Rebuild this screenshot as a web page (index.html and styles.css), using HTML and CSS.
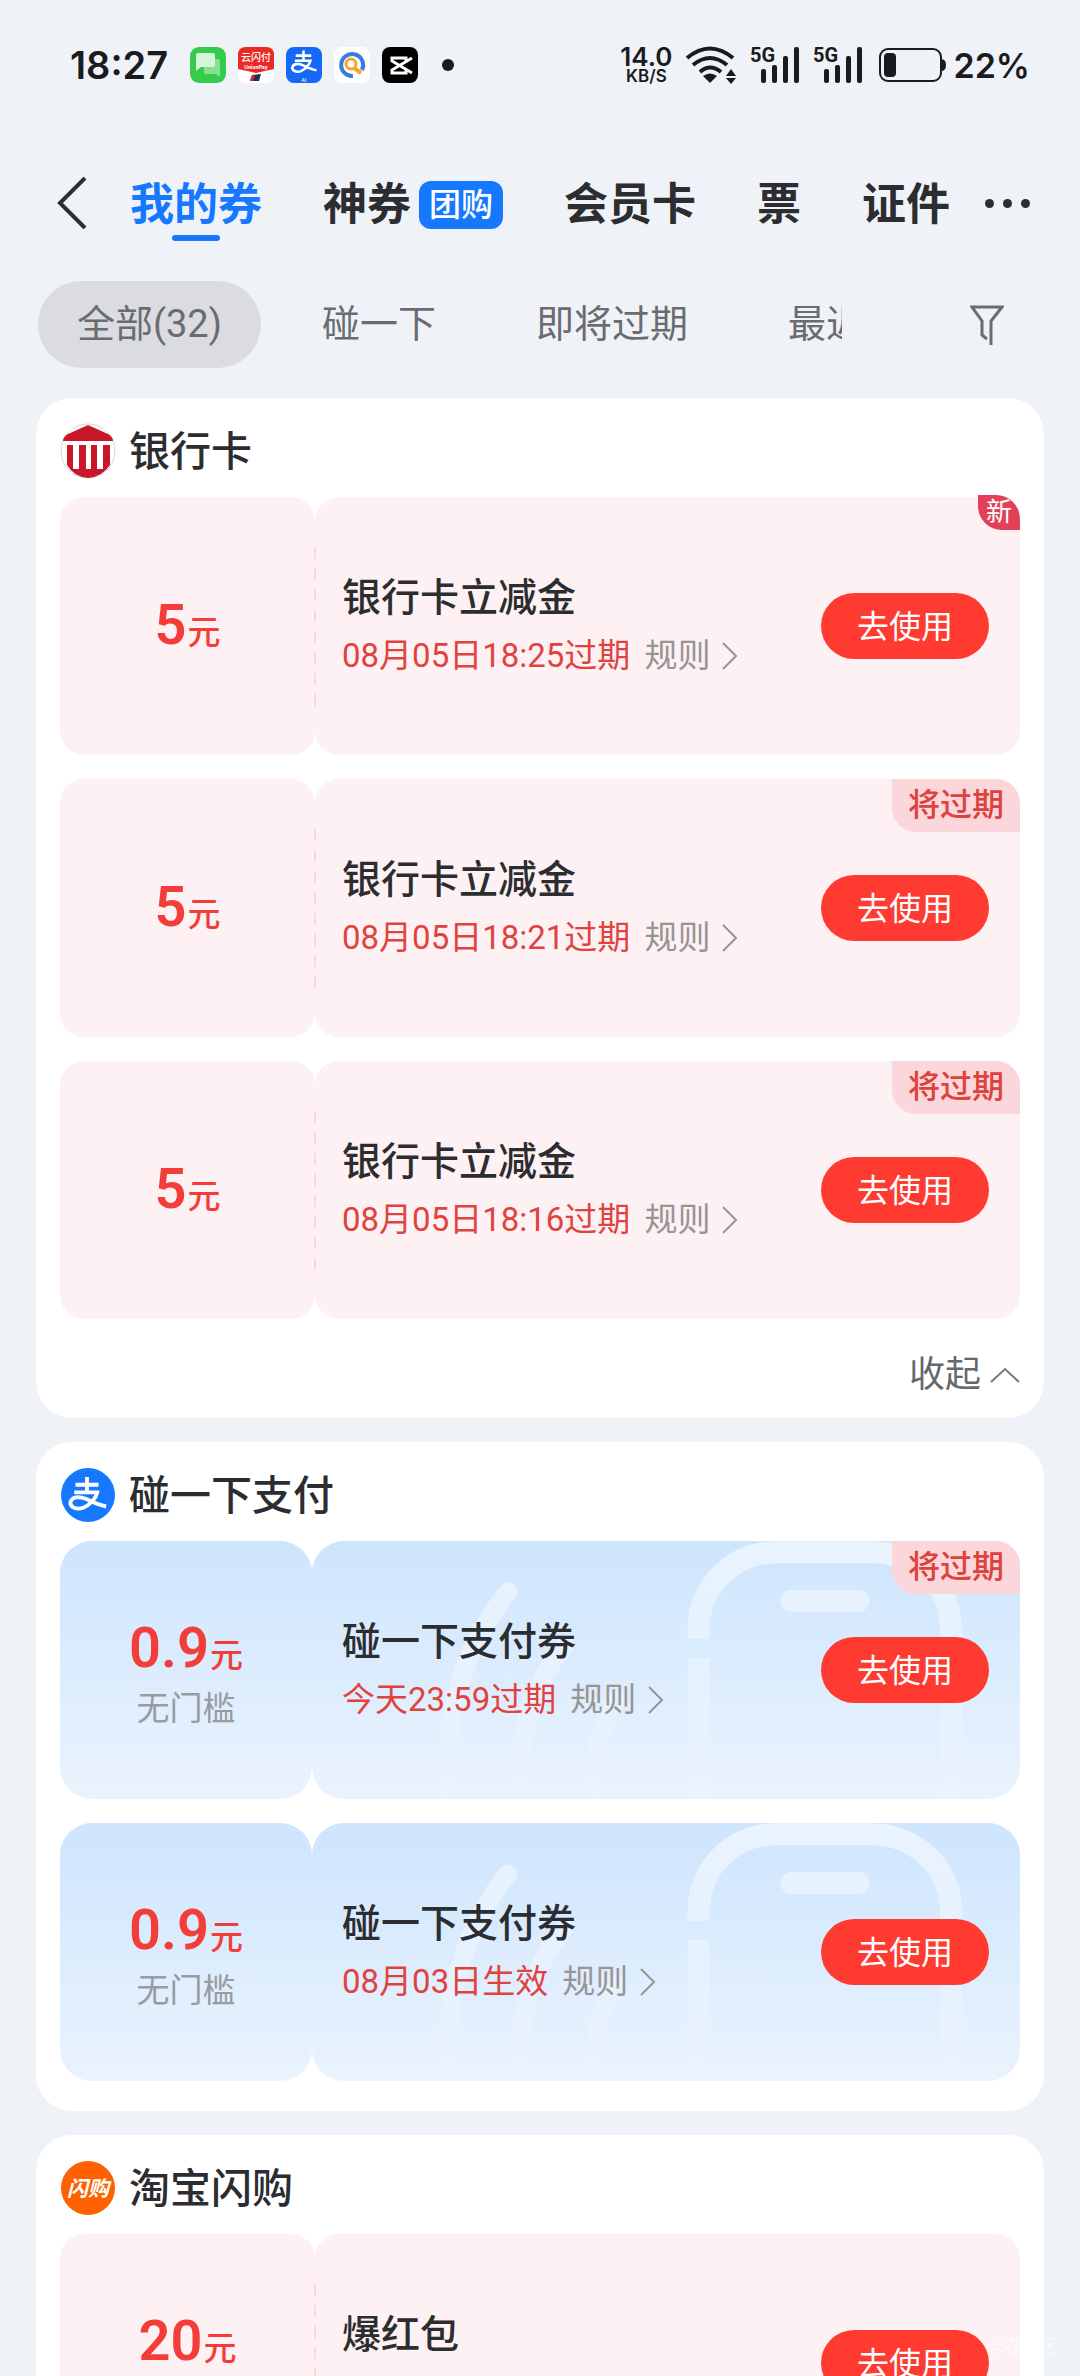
FILE: index.html
```html
<!DOCTYPE html>
<html lang="zh-CN">
<head>
    <meta charset="UTF-8">
    <meta name="viewport" content="width=device-width, initial-scale=1.0">
    <title>我的券</title>
    <link rel="stylesheet" href="styles.css">
</head>
<body>
    <svg class="sprite" aria-hidden="true">
        <symbol id="arrow-right" viewBox="0 0 16 28">
            <path d="M1 1 L14 14 L1 27" fill="none" stroke="currentColor" stroke-width="2"/>
        </symbol>
        <symbol id="alipay" viewBox="0 0 36 36">
            <path d="M9 10 H27 M18 4 V16 M8 16 H26 C25 21 20 26 15 28 C9 30 5 27 5 24 C6 19 12 19 17 21 C23 24 27 26 33 27" fill="none" stroke="#fff" stroke-width="3"/>
        </symbol>
        <symbol id="signal-bars" viewBox="0 0 50 40">
            <rect x="11" y="24" width="5" height="14" rx="2"/>
            <rect x="22" y="20" width="5" height="18" rx="2"/>
            <rect x="33" y="11" width="5" height="27" rx="2"/>
            <rect x="44" y="2" width="5" height="36" rx="2"/>
        </symbol>
        <symbol id="phone-art" viewBox="0 0 709 258">
            <g fill="none" stroke="url(#art-fade)" stroke-width="22">
                <path d="M387 98 V90 C387 42 424 11 466 11 H560 C602 11 640 42 640 90 V258"/>
                <path d="M387 117 V258"/>
                <path d="M480 60 H547" stroke-linecap="round"/>
                <g stroke-width="19" stroke-linecap="round">
                    <path d="M196 51 C160 96 134 160 134 246"/>
                    <path d="M254 104 C222 140 208 190 208 246"/>
                    <path d="M304 160 C286 190 283 215 283 246"/>
                </g>
            </g>
        </symbol>
        <defs>
            <linearGradient id="art-fade" gradientUnits="userSpaceOnUse" x1="0" y1="0" x2="0" y2="258">
                <stop offset="0" stop-color="#eaf4ff"/>
                <stop offset="1" stop-color="#eaf4ff" stop-opacity="0.4"/>
            </linearGradient>
        </defs>
    </svg>

    <div class="status-bar">
        <span class="time">18:27</span>
        <div class="app-icons">
            <svg viewBox="0 0 36 36">
                <rect width="36" height="36" rx="9" fill="#35cc4c"/>
                <path d="M14 12 H28 Q30 12 30 14 V30 L26 27 H16 Q14 27 14 25 Z" fill="#86e291"/>
                <path d="M8 6 H23 Q25 6 25 8 V18 Q25 20 23 20 H11 L6 24 V8 Q6 6 8 6 Z" fill="#d3f6d6"/>
            </svg>
            <svg viewBox="0 0 36 36">
                <rect width="36" height="36" rx="8" fill="#fff"/>
                <path d="M8 0 H28 Q36 0 36 8 V22 L18 26 L0 22 V8 Q0 0 8 0 Z" fill="#e72a26"/>
                <path d="M14 28 L23 27 L21 34 H12 Z" fill="#1b3550"/>
                <path d="M14 28 L17 28 L15 34 H12 Z" fill="#d22d35"/>
                <text x="18" y="14" font-size="10" font-weight="500" fill="#fff" text-anchor="middle">云闪付</text>
                <text x="18" y="22" font-size="5" font-weight="700" fill="#fff" text-anchor="middle">UnionPay</text>
            </svg>
            <svg viewBox="0 0 36 36">
                <rect width="36" height="36" rx="8" fill="#1669f7"/>
                <use href="#alipay" x="2" y="0" width="31" height="31"/>
                <text x="18" y="35" font-size="5" fill="#fff" text-anchor="middle">AI</text>
            </svg>
            <svg viewBox="0 0 36 36">
                <rect width="36" height="36" rx="8" fill="#fff"/>
                <path d="M19 29 A11 11 0 1 1 28 23" fill="none" stroke="#3a7be0" stroke-width="4"/>
                <circle cx="17" cy="17" r="5" fill="none" stroke="#f0a92c" stroke-width="3"/>
                <path d="M20 21 L27 26" stroke="#f0a92c" stroke-width="4"/>
            </svg>
            <svg viewBox="0 0 36 36">
                <rect width="36" height="36" rx="8" fill="#000"/>
                <path d="M30 11 L10 23 V26 H24 V23 M30 26 L10 14 V11 H24 V14" fill="none" stroke="#fff" stroke-width="3"/>
            </svg>
        </div>
        <span class="dot"></span>
        <div class="net-speed"><b>14.0</b><span>KB/S</span></div>
        <svg class="wifi" viewBox="0 0 52 40">
            <g fill="none" stroke="#1a1b1e" stroke-width="4">
                <path d="M2 13 Q25 -6 48 13"/>
                <path d="M8 20 Q25 6 42 20"/>
                <path d="M15 27 Q25 18 36 27"/>
            </g>
            <path d="M25 38 L18 31 Q25 26 32 31 Z" fill="#1a1b1e"/>
            <path d="M41 31 L46 24 L51 31 Z M41 33 L46 39 L51 33 Z" fill="#1a1b1e"/>
        </svg>
        <svg class="signal" viewBox="0 0 50 40">
            <text x="0" y="17">5G</text>
            <use href="#signal-bars" width="50" height="40"/>
        </svg>
        <svg class="signal" viewBox="0 0 50 40">
            <text x="0" y="17">5G</text>
            <use href="#signal-bars" width="50" height="40"/>
        </svg>
        <svg class="battery" viewBox="0 0 68 34">
            <rect x="1" y="1" width="61" height="32" rx="8" fill="none" stroke="#1a1b1e" stroke-width="2"/>
            <rect x="5" y="5" width="12" height="24" rx="4" fill="#1a1b1e"/>
            <path d="M62 11 Q67 11 67 17 Q67 23 62 23 Z" fill="#1a1b1e"/>
        </svg>
        <span class="percent">22%</span>
    </div>

    <nav class="tabs">
        <button class="back" aria-label="返回">
            <svg viewBox="0 0 30 52"><path d="M28 1 L3 26 L28 51" fill="none" stroke="#2c2e33" stroke-width="4"/></svg>
        </button>
        <a href="#" class="tab active">我的券</a>
        <a href="#" class="tab">神券<span class="tab-badge">团购</span></a>
        <a href="#" class="tab">会员卡</a>
        <a href="#" class="tab">票</a>
        <a href="#" class="tab">证件</a>
        <button class="more" aria-label="更多"><i></i><i></i><i></i></button>
    </nav>

    <div class="filters">
        <div class="chips">
            <button class="chip active">全部(32)</button>
            <button class="chip">碰一下</button>
            <button class="chip">即将过期</button>
            <button class="chip">最近</button>
        </div>
        <button class="filter-btn" aria-label="筛选">
            <svg viewBox="0 0 34 40"><path d="M17 34 L12 30 V16 L2 2 H32 L21 16 V40" fill="none" stroke="#6a6c70" stroke-width="3"/></svg>
        </button>
    </div>

    <main class="list">
        <section class="card">
            <h2>
                <svg class="logo" viewBox="0 0 56 56">
                    <circle cx="28" cy="28" r="27" fill="#fff" stroke="#d5d5d5"/>
                    <path d="M3 18 Q3 14 8 11 L28 2 L48 11 Q53 14 53 18 Z" fill="#c8162a"/>
                    <path d="M7 22 H13 V46 H19 V22 H26 V46 H31 V22 H37 V46 H43 V22 H50 V42 Q42 54 28 55 Q14 54 7 42 Z" fill="#c8162a"/>
                </svg>
                <span>银行卡</span>
            </h2>
            <article class="coupon">
                <div class="amount"><p class="price">5<small>元</small></p></div>
                <div class="info">
                    <div class="text">
                        <h3>银行卡立减金</h3>
                        <p class="expire">08月05日18:25过期 <a href="#">规则<svg><use href="#arrow-right"/></svg></a></p>
                    </div>
                    <button class="use-btn">去使用</button>
                </div>
                <span class="tag new">新</span>
            </article>
            <article class="coupon">
                <div class="amount"><p class="price">5<small>元</small></p></div>
                <div class="info">
                    <div class="text">
                        <h3>银行卡立减金</h3>
                        <p class="expire">08月05日18:21过期 <a href="#">规则<svg><use href="#arrow-right"/></svg></a></p>
                    </div>
                    <button class="use-btn">去使用</button>
                </div>
                <span class="tag">将过期</span>
            </article>
            <article class="coupon">
                <div class="amount"><p class="price">5<small>元</small></p></div>
                <div class="info">
                    <div class="text">
                        <h3>银行卡立减金</h3>
                        <p class="expire">08月05日18:16过期 <a href="#">规则<svg><use href="#arrow-right"/></svg></a></p>
                    </div>
                    <button class="use-btn">去使用</button>
                </div>
                <span class="tag">将过期</span>
            </article>
            <button class="collapse">收起
                <svg viewBox="0 0 30 16"><path d="M1 15 L15 2 L29 15" fill="none" stroke="#77797d" stroke-width="2"/></svg>
            </button>
        </section>

        <section class="card">
            <h2>
                <svg class="logo" viewBox="0 0 56 56">
                    <circle cx="28" cy="28" r="27" fill="#1677ff"/>
                    <use href="#alipay" x="4" y="5" width="46" height="46"/>
                </svg>
                <span>碰一下支付</span>
            </h2>
            <article class="coupon blue">
                <div class="amount">
                    <p class="price">0.9<small>元</small></p>
                    <p class="limit">无门槛</p>
                </div>
                <div class="info">
                    <svg class="art"><use href="#phone-art"/></svg>
                    <div class="text">
                        <h3>碰一下支付券</h3>
                        <p class="expire">今天23:59过期 <a href="#">规则<svg><use href="#arrow-right"/></svg></a></p>
                    </div>
                    <button class="use-btn">去使用</button>
                </div>
                <span class="tag">将过期</span>
            </article>
            <article class="coupon blue">
                <div class="amount">
                    <p class="price">0.9<small>元</small></p>
                    <p class="limit">无门槛</p>
                </div>
                <div class="info">
                    <svg class="art"><use href="#phone-art"/></svg>
                    <div class="text">
                        <h3>碰一下支付券</h3>
                        <p class="expire">08月03日生效 <a href="#">规则<svg><use href="#arrow-right"/></svg></a></p>
                    </div>
                    <button class="use-btn">去使用</button>
                </div>
            </article>
        </section>

        <section class="card">
            <h2>
                <svg class="logo" viewBox="0 0 56 56">
                    <circle cx="28" cy="28" r="27" fill="#ff6000"/>
                    <text x="28" y="36" font-size="21" font-weight="700" font-style="italic" fill="#fff" text-anchor="middle">闪购</text>
                </svg>
                <span>淘宝闪购</span>
            </h2>
            <article class="coupon">
                <div class="amount">
                    <p class="price">20<small>元</small></p>
                    <p class="limit"></p>
                </div>
                <div class="info">
                    <div class="text">
                        <h3>爆红包</h3>
                        <p class="expire"></p>
                    </div>
                    <button class="use-btn">去使用</button>
                </div>
            </article>
        </section>
    </main>

    <div class="watermark">卡农社区</div>
</body>
</html>
```
FILE: styles.css
```css
* {
    box-sizing: border-box;
}
body {
    margin: 0;
    height: 100vh;
    display: flex;
    flex-direction: column;
    overflow: hidden;
    background: #eff3f8;
    color: #2c2d30;
    font-family: Roboto, "Noto Sans CJK SC", sans-serif;
}
h2, h3, p {
    margin: 0;
}
a {
    color: inherit;
    text-decoration: none;
}
button {
    border: none;
    padding: 0;
    background: none;
    color: inherit;
    font-family: inherit;
    cursor: pointer;
}
svg {
    display: block;
    flex: none;
}
.sprite {
    position: absolute;
    width: 0;
    height: 0;
}

/* status bar */
.status-bar {
    flex: none;
    display: flex;
    align-items: center;
    height: 130px;
    padding: 0 50px 0 70px;
    color: #1a1b1e;
    font-family: Inter, "Noto Sans CJK SC", sans-serif;
}
.time {
    font-size: 38px;
    font-weight: 600;
}
.app-icons {
    display: flex;
    gap: 12px;
    margin-left: 22px;
}
.app-icons svg {
    width: 36px;
    height: 36px;
}
.dot {
    width: 12px;
    height: 12px;
    margin-left: 24px;
    border-radius: 50%;
    background: #1a1b1e;
}
.net-speed {
    display: flex;
    flex-direction: column;
    align-items: center;
    margin-left: auto;
    line-height: 16px;
}
.net-speed b {
    font-size: 26px;
    line-height: 22px;
    font-weight: 600;
}
.net-speed span {
    font-size: 17px;
    font-weight: 600;
}
.wifi {
    width: 52px;
    height: 40px;
    margin: 0 13px;
}
.signal {
    width: 50px;
    height: 40px;
    margin-right: 13px;
    fill: #1a1b1e;
    font-family: Roboto, sans-serif;
    font-size: 20px;
    font-weight: 700;
}
.battery {
    width: 68px;
    height: 34px;
    margin: 0 6px 0 3px;
}
.percent {
    font-size: 34px;
    font-weight: 600;
}

/* tabs */
.tabs {
    flex: none;
    display: flex;
    align-items: center;
    gap: 61px;
    height: 146px;
    padding: 0 48px 0 57px;
}
.back {
    margin-right: -18px;
}
.back svg {
    width: 30px;
    height: 52px;
}
.tab {
    position: relative;
    display: flex;
    align-items: center;
    padding-top: 3px;
    font-size: 44px;
    line-height: 64px;
    font-weight: 700;
    white-space: nowrap;
}
.tab.active {
    color: #1677ff;
}
.tab.active::after {
    content: "";
    position: absolute;
    left: 50%;
    bottom: -4px;
    width: 48px;
    height: 6px;
    margin-left: -24px;
    border-radius: 3px;
    background: #1677ff;
}
.tab-badge {
    margin-left: 8px;
    padding: 0 10px;
    border-radius: 12px;
    background: #1677ff;
    color: #fff;
    font-size: 32px;
    line-height: 48px;
    font-weight: 500;
}
.more {
    display: flex;
    gap: 9px;
    margin-left: -26px;
}
.more i {
    width: 9px;
    height: 9px;
    border-radius: 50%;
    background: #2c2e33;
}

/* filter chips */
.filters {
    flex: none;
    display: flex;
    align-items: center;
    justify-content: space-between;
    margin: 5px 76px 30px 38px;
}
.chips {
    display: flex;
    gap: 22px;
    width: 804px;
    overflow: hidden;
}
.chip {
    flex: none;
    padding: 0 39px;
    border-radius: 44px;
    color: #6a6c70;
    font-size: 38px;
    line-height: 87px;
}
.chip.active {
    background: #dadce1;
}
.filter-btn svg {
    width: 34px;
    height: 40px;
}

/* coupon list */
.list {
    flex: 1;
    min-height: 0;
    display: flex;
    flex-direction: column;
    gap: 24px;
    padding: 0 36px;
    overflow: hidden;
}
.card {
    flex: none;
    padding: 0 24px 30px;
    border-radius: 36px;
    background: #fff;
}
.card h2 {
    display: flex;
    align-items: center;
    gap: 13px;
    height: 99px;
    padding-top: 6px;
    font-size: 41px;
    font-weight: 500;
}
.card h2 span {
    padding-bottom: 5px;
}
.logo {
    width: 56px;
    height: 56px;
}
.coupon {
    position: relative;
    display: grid;
    grid-template-columns: 255px 1fr;
    height: 258px;
    margin-bottom: 24px;
}
.coupon:last-child {
    margin-bottom: 0;
}
.amount,
.info {
    border-radius: 24px;
    background: #fef1f3;
}
.amount {
    display: flex;
    flex-direction: column;
    align-items: center;
    justify-content: center;
}
.info {
    position: relative;
    display: flex;
    align-items: center;
    justify-content: space-between;
    padding: 0 31px 0 27px;
}
.info::before {
    content: "";
    position: absolute;
    left: -1px;
    top: 50px;
    width: 2px;
    height: 160px;
    background: repeating-linear-gradient(#f6dadd 0 12px, transparent 12px 21px);
}
.price {
    padding-top: 6px;
    color: #f23d38;
    font-size: 56px;
    line-height: 64px;
    font-weight: 600;
}
.price small {
    margin-left: 1px;
    font-size: 33px;
    font-weight: 500;
}
.limit {
    height: 42px;
    color: #989b9f;
    font-size: 33px;
    line-height: 42px;
}
.text {
    position: relative;
}
.text h3 {
    font-size: 39px;
    line-height: 59px;
    font-weight: 500;
}
.expire {
    display: flex;
    gap: 14px;
    height: 55px;
    color: #e0433f;
    font-size: 33px;
    line-height: 55px;
}
.expire a {
    display: flex;
    align-items: center;
    gap: 12px;
    color: #989494;
}
.expire svg {
    width: 16px;
    height: 28px;
}
.use-btn {
    position: relative;
    width: 168px;
    height: 66px;
    padding-bottom: 4px;
    border-radius: 33px;
    background: #ff3a30;
    color: #fff;
    font-size: 32px;
}
.tag {
    position: absolute;
    top: 0;
    right: 0;
    padding: 0 16px;
    border-radius: 0 24px 0 24px;
    background: #fbd6da;
    color: #dd423f;
    font-size: 32px;
    line-height: 53px;
    font-weight: 500;
}
.tag.new {
    top: -2px;
    padding: 0 8px;
    background: #e23f58;
    color: #fff;
    font-size: 26px;
    line-height: 35px;
    font-weight: 400;
}

.blue {
    grid-template-columns: 252px 1fr;
}
.blue .amount,
.blue .info {
    border-radius: 32px;
    background: linear-gradient(#cee5fe, #eaf3fd);
}
.blue .info {
    padding-left: 30px;
}
.blue .info::before {
    display: none;
}
.art {
    position: absolute;
    left: 0;
    top: 0;
    width: 100%;
    height: 100%;
}

.collapse {
    display: flex;
    align-items: center;
    gap: 9px;
    margin: 30px 0 -13px auto;
    color: #66686c;
    font-size: 36px;
    line-height: 52px;
}
.collapse svg {
    width: 30px;
    height: 16px;
}

.watermark {
    position: fixed;
    right: 22px;
    bottom: 18px;
    color: rgba(255, 255, 255, 0.6);
    font-size: 18px;
}
```
